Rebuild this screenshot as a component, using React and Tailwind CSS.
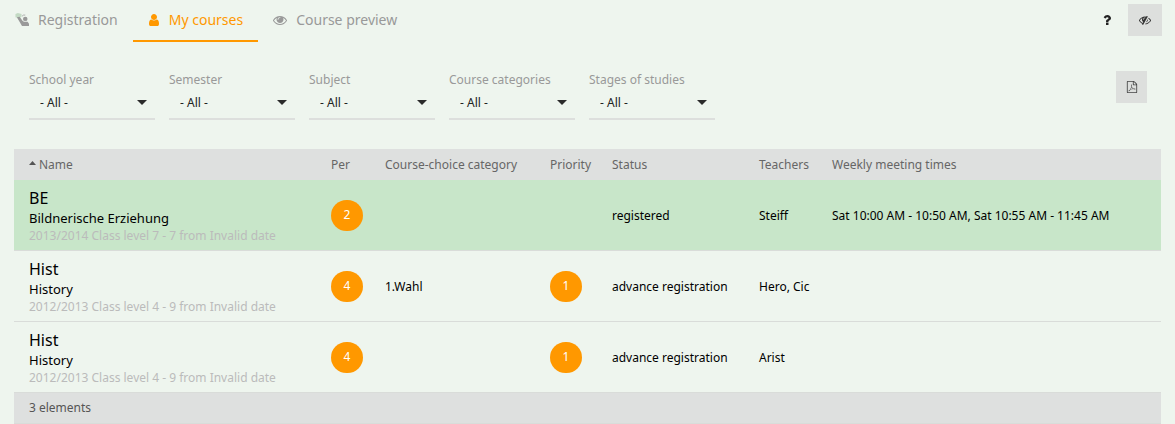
import React from "react";

const EYE =
  "M1664 960q-152-236-381-353 61 104 61 225 0 185-131.5 316.5t-316.5 131.5-316.5-131.5-131.5-316.5q0-121 61-225-229 117-381 353 133 205 333.5 326.5t434.5 121.5 434.5-121.5 333.5-326.5zm-720-384q0-20-14-34t-34-14q-125 0-214.5 89.5t-89.5 214.5q0 20 14 34t34 14 34-14 14-34q0-86 61-147t147-61q20 0 34-14t14-34zm848 384q0 34-20 69-140 230-376.5 368.5t-499.5 138.5-499.5-139-376.5-368q-20-35-20-69t20-69q140-229 376.5-368t499.5-139 499.5 139 376.5 368q20 35 20 69z";
const USER =
  "M1536 1399q0 109-62.5 187t-150.5 78h-854q-88 0-150.5-78t-62.5-187q0-85 8.5-160.5t31.5-152 58.5-131 94-89 134.5-34.5q131 128 313 128t313-128q76 0 134.5 34.5t94 89 58.5 131 31.5 152 8.5 160.5zm-256-887q0 159-112.5 271.5t-271.5 112.5-271.5-112.5-112.5-271.5 112.5-271.5 271.5-112.5 271.5 112.5 112.5 271.5z";
const EYE_SLASH =
  "M555 1335l78-141q-87-63-136-159t-49-203q0-121 61-225-229 117-381 353 167 258 427 375zm389-759q0-20-14-34t-34-14q-125 0-214.5 89.5t-89.5 214.5q0 20 14 34t34 14 34-14 14-34q0-86 61-147t147-61q20 0 34-14t14-34zm363-191q0 7-1 9-106 189-316 567t-315 566l-49 89q-10 16-28 16-12 0-134-70-16-10-16-28 0-12 44-87-143-65-263.5-173t-208.5-245q-20-31-20-69t20-69q153-235 380-371t496-136q89 0 180 17l54-97q10-16 28-16 5 0 18 6t31 15.5 33 18.5 31.5 18.5 19.5 11.5q16 10 16 27zm37 447q0 139-79 253.5t-209 164.5l280-502q8 45 8 84zm448 128q0 35-20 69-39 64-109 145-150 172-347.5 267t-419.5 95l74-132q212-18 392.5-137t301.5-307q-115-179-282-294l63-112q95 64 182.5 153t144.5 184q20 34 20 69z";
const FILE_PDF =
  "M1596 380q28 28 48 76t20 88v1152q0 40-28 68t-68 28h-1344q-40 0-68-28t-28-68v-1600q0-40 28-68t68-28h896q40 0 88 20t76 48zm-444-244v376h376q-10-29-22-41l-313-313q-12-12-41-22zm384 1528v-1024h-416q-40 0-68-28t-28-68v-416h-768v1536h1280zm-514-593q33 26 84 56 59-7 117-7 147 0 177 49 16 22 2 52 0 1-1 2l-2 2v1q-6 38-71 38-48 0-115-20t-130-53q-221 24-392 83-153 262-242 262-15 0-28-7l-24-12q-1-1-6-5-10-10-6-36 9-40 56-91.5t132-96.5q14-9 23 6 2 2 2 4 52-85 107-197 68-136 104-262-24-82-30.5-159.5t6.5-127.5q11-40 42-40h22q23 0 35 15 18 21 9 68-2 6-4 8 1 3 1 8v30q-2 123-14 192 55 164 146 238zm-576 411q52-24 137-158-51 40-87.5 84t-49.5 74zm398-920q-15 42-2 132 1-7 7-44 0-3 7-43 1-4 4-8-1-1-1-2t-1-2-1-3q-1-22-13-36 0 1-1 2v4zm-124 661q135-54 284-81-2-1-13-9.500t-16-13.500q-76-67-127-176-27 86-83 197-30 56-45 83zm646-16q-24-24-140-24 76 28 124 28 14 0 18-1 0-1-2-3z";
const QUESTION =
  "M1088 1256v240q0 16-12 28t-28 12h-240q-16 0-28-12t-12-28v-240q0-16 12-28t28-12h240q16 0 28 12t12 28zm316-600q0 54-15.5 101t-35 76.5-55 59.5-57.5 43.5-61 35.5q-41 23-68.5 65t-27.5 67q0 17-12 32.5t-28 15.5h-240q-15 0-25.5-18.5t-10.5-37.5v-45q0-83 65-156.5t143-108.5q59-27 84-56t25-76q0-42-46.5-74t-107.5-32q-65 0-108 29-35 25-107 115-13 16-31 16-12 0-25-8l-164-125q-13-10-15.5-25t5.5-28q160-266 464-266 80 0 161 31t146 83 106 127.5 41 158.5z";

function Glyph({ d, className, viewBox = "0 0 1792 1792" }) {
  return (
    <svg viewBox={viewBox} fill="currentColor" className={className} aria-hidden="true">
      <path d={d} />
    </svg>
  );
}

function RaisedHandIcon() {
  return (
    <svg viewBox="0 0 15 15" className="size-[14px]" aria-hidden="true">
      <path d="M.5 1 3 0 7 1 7 4 4 5.500.5 4.500z" fill="#c3dac4" />
      <path d="M2 4.500 5 4 8 8.300 9.500 9.300H13.500L15 11.500V14H7.500L5.500 10.500z" fill="#999" />
      <circle cx="11" cy="6.300" r="2.400" fill="#999" />
      <path d="M7.500 3.500Q8.500 1.800 11 2.200" fill="none" stroke="#aaa" />
    </svg>
  );
}

function Tab({ active, icon, children }) {
  return (
    <a
      href="#"
      aria-current={active ? "page" : undefined}
      className={
        "flex h-[42px] items-center gap-[9px] border-b-2 px-[15px] text-sm " +
        (active ? "border-[#ff9800] text-[#ff9800]" : "border-transparent text-[#999]")
      }
    >
      {icon}
      <span>{children}</span>
    </a>
  );
}

function Filter({ id, label }) {
  return (
    <div className="w-[126px]">
      <label htmlFor={id} className="block text-xs leading-4 text-[#999]">
        {label}
      </label>
      <div className="relative">
        <select
          id={id}
          className="h-8 w-full appearance-none border-b-2 border-[#dddfdd] bg-transparent pl-[11px] text-xs text-[#222] outline-none"
        >
          <option>- All -</option>
        </select>
        <svg
          viewBox="0 0 10 5"
          className="pointer-events-none absolute top-3 right-2 h-[5px] w-[10px]"
          fill="#2b2b2b"
          aria-hidden="true"
        >
          <path d="M0 0h10L5 5z" />
        </svg>
      </div>
    </div>
  );
}

function Count({ children }) {
  return (
    <span className="flex h-[31px] w-8 items-center justify-center rounded-full bg-[#ff9800] text-xs text-white">
      {children}
    </span>
  );
}

function Cell({ children }) {
  return <td className="border-b border-[#d9dcd9] pt-0.5 pl-[15px] whitespace-nowrap">{children}</td>;
}

function CountCell({ value }) {
  return (
    <td className="border-b border-[#d9dcd9] pl-[15px]">{value !== undefined && <Count>{value}</Count>}</td>
  );
}

const filters = [
  ["year", "School year"],
  ["semester", "Semester"],
  ["subject", "Subject"],
  ["categories", "Course categories"],
  ["stages", "Stages of studies"],
];

const courses = [
  {
    code: "BE",
    name: "Bildnerische Erziehung",
    info: "2013/2014 Class level 7 - 7 from Invalid date",
    per: 2,
    status: "registered",
    teachers: "Steiff",
    times: "Sat 10:00 AM - 10:50 AM, Sat 10:55 AM - 11:45 AM",
    registered: true,
  },
  {
    code: "Hist",
    name: "History",
    info: "2012/2013 Class level 4 - 9 from Invalid date",
    per: 4,
    category: "1.Wahl",
    priority: 1,
    status: "advance registration",
    teachers: "Hero, Cic",
  },
  {
    code: "Hist",
    name: "History",
    info: "2012/2013 Class level 4 - 9 from Invalid date",
    per: 4,
    priority: 1,
    status: "advance registration",
    teachers: "Arist",
  },
];

const columns = ["Per", "Course-choice category", "Priority", "Status", "Teachers", "Weekly meeting times"];

export default function App() {
  return (
    <div className="min-h-screen bg-[#eef5ee] font-['Noto_Sans',sans-serif] text-xs text-black">
      <header className="flex items-start justify-between pr-[13px]">
        <nav className="flex">
          <Tab icon={<RaisedHandIcon />}>Registration</Tab>
          <Tab active icon={<Glyph d={USER} viewBox="192 128 1408 1536" className="h-3 w-3" />}>
            My courses
          </Tab>
          <Tab icon={<Glyph d={EYE} className="size-[14px]" />}>Course preview</Tab>
        </nav>
        <div className="flex items-center gap-[15px] pt-1">
          <button type="button" aria-label="Help" className="flex size-3 items-center justify-center text-[#222]">
            <Glyph d={QUESTION} viewBox="256 128 1280 1536" className="size-3" />
          </button>
          <button
            type="button"
            aria-label="Toggle visibility"
            className="flex h-8 w-[34px] items-center justify-center bg-[#dddfdd] text-[#333]"
          >
            <Glyph d={EYE_SLASH} className="size-3" />
          </button>
        </div>
      </header>

      <section className="flex items-start justify-between pt-[29px] pr-7 pl-[29px]">
        <div className="flex gap-[14px] pt-px">
          {filters.map(([id, label]) => (
            <Filter key={id} id={id} label={label} />
          ))}
        </div>
        <button
          type="button"
          aria-label="Export as PDF"
          className="flex h-8 w-[31px] items-center justify-center bg-[#dddfdd] text-[#444]"
        >
          <Glyph d={FILE_PDF} className="size-3" />
        </button>
      </section>

      <main className="px-[14px] pt-[29px]">
        <table className="w-full table-fixed border-separate border-spacing-0 text-left">
          <colgroup>
            <col className="w-[302px]" />
            <col className="w-[54px]" />
            <col className="w-[165px]" />
            <col className="w-[62px]" />
            <col className="w-[147px]" />
            <col className="w-[73px]" />
            <col />
          </colgroup>
          <thead>
            <tr className="h-[31px] bg-[#dee0df] text-[#666]">
              <th className="pl-[15px] font-normal">
                <span className="flex items-center gap-[3px]">
                  <svg viewBox="0 0 7 8" className="h-2 w-[7px]" fill="#555" aria-hidden="true">
                    <path d="M0 4h7L3.500 0z" />
                  </svg>
                  Name
                </span>
              </th>
              {columns.map((c) => (
                <th key={c} className="pl-[15px] font-normal whitespace-nowrap">
                  {c}
                </th>
              ))}
            </tr>
          </thead>
          <tbody>
            {courses.map((c, i) => (
              <tr key={i} className={"h-[71px] " + (c.registered ? "bg-[#c8e6c9]" : "")}>
                <Cell>
                  <div className="text-base leading-[22px]">{c.code}</div>
                  <div className="text-[13px] leading-[18px]">{c.name}</div>
                  <div className="leading-[18px] text-[#bbb]">{c.info}</div>
                </Cell>
                <CountCell value={c.per} />
                <Cell>{c.category}</Cell>
                <CountCell value={c.priority} />
                <Cell>{c.status}</Cell>
                <Cell>{c.teachers}</Cell>
                <Cell>{c.times}</Cell>
              </tr>
            ))}
          </tbody>
          <tfoot>
            <tr className="h-[31px] bg-[#dee0df] text-[#555]">
              <td colSpan={7} className="border-b border-[#d9dcd9] pl-[15px]">
                3 elements
              </td>
            </tr>
          </tfoot>
        </table>
      </main>
    </div>
  );
}
